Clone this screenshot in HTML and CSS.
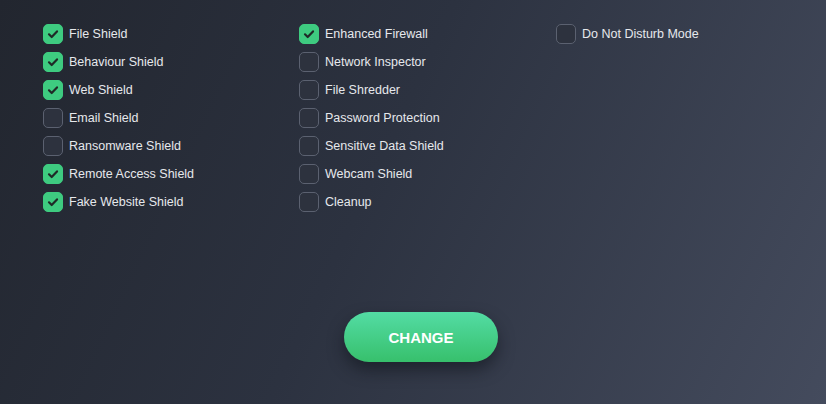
FILE: index.html
```html
<!DOCTYPE html>
<html>
<head>
<meta charset="utf-8">
<link rel="stylesheet" href="styles.css">
</head>
<body>
<div class="page">
  <div class="grid">
    <div class="col">
      <label class="item"><span class="box on"><svg viewBox="0 0 20 20"><path d="M6 10.3l2.7 2.7 5.3-5.6"/></svg></span>File Shield</label>
      <label class="item"><span class="box on"><svg viewBox="0 0 20 20"><path d="M6 10.3l2.7 2.7 5.3-5.6"/></svg></span>Behaviour Shield</label>
      <label class="item"><span class="box on"><svg viewBox="0 0 20 20"><path d="M6 10.3l2.7 2.7 5.3-5.6"/></svg></span>Web Shield</label>
      <label class="item"><span class="box"></span>Email Shield</label>
      <label class="item"><span class="box"></span>Ransomware Shield</label>
      <label class="item"><span class="box on"><svg viewBox="0 0 20 20"><path d="M6 10.3l2.7 2.7 5.3-5.6"/></svg></span>Remote Access Shield</label>
      <label class="item"><span class="box on"><svg viewBox="0 0 20 20"><path d="M6 10.3l2.7 2.7 5.3-5.6"/></svg></span>Fake Website Shield</label>
    </div>
    <div class="col">
      <label class="item"><span class="box on"><svg viewBox="0 0 20 20"><path d="M6 10.3l2.7 2.7 5.3-5.6"/></svg></span>Enhanced Firewall</label>
      <label class="item"><span class="box"></span>Network Inspector</label>
      <label class="item"><span class="box"></span>File Shredder</label>
      <label class="item"><span class="box"></span>Password Protection</label>
      <label class="item"><span class="box"></span>Sensitive Data Shield</label>
      <label class="item"><span class="box"></span>Webcam Shield</label>
      <label class="item"><span class="box"></span>Cleanup</label>
    </div>
    <div class="col">
      <label class="item"><span class="box"></span>Do Not Disturb Mode</label>
    </div>
  </div>
  <div class="actions">
    <button class="btn">CHANGE</button>
  </div>
</div>
</body>
</html>
```

FILE: styles.css
```css
html, body {
  margin: 0;
  padding: 0;
  height: 100%;
}
body {
  background: linear-gradient(115deg, #22262f 0%, #2c3240 45%, #444b5d 100%);
  font-family: "Liberation Sans", Arial, sans-serif;
  color: #e6e8ec;
  overflow: hidden;
}
.page {
  padding: 24px 0 0 43px;
}
.grid {
  display: grid;
  grid-template-columns: 256px 257px 256px;
}
.col {
  display: flex;
  flex-direction: column;
  gap: 8px;
}
.item {
  display: flex;
  align-items: center;
  gap: 6px;
  height: 20px;
  font-size: 12.5px;
  line-height: 20px;
}
.box {
  box-sizing: border-box;
  width: 20px;
  height: 20px;
  border-radius: 5px;
  border: 1px solid #5b6170;
  background: #2d323e;
  flex: none;
  display: flex;
}
.box.on {
  background: #3ecb80;
  border-color: #3ecb80;
}
.box svg {
  width: 20px;
  height: 20px;
  margin: -1px;
}
.box svg path {
  fill: none;
  stroke: #1f2a27;
  stroke-width: 2.2;
  stroke-linecap: round;
  stroke-linejoin: round;
}
.actions {
  display: flex;
  padding: 100px 0 0 301px;
}
.btn {
  width: 154px;
  height: 50px;
  border: none;
  border-radius: 25px;
  background: linear-gradient(180deg, #53dca4 0%, #37c06c 100%);
  color: #ffffff;
  font-family: "Liberation Sans", Arial, sans-serif;
  font-weight: bold;
  font-size: 15px;
  box-shadow: 0 8px 16px rgba(15, 18, 25, 0.55);
}
```
